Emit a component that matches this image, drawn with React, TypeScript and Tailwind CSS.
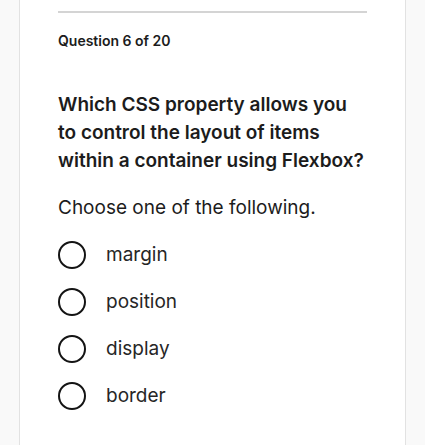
import { useState } from 'react';

const options = ['margin', 'position', 'display', 'border'];

export default function App() {
  const [selected, setSelected] = useState<string | null>(null);

  return (
    <div className="min-h-[445px] bg-[#f9f9f9] pl-[19px]" style={{ fontFamily: 'Inter, "Noto Sans", sans-serif' }}>
      <div className="w-[387px] min-h-[445px] bg-white border-x border-[#e2e2e2] px-[38px] pt-[11px] text-[#1c1c1c]">
        <div className="h-[2px] bg-[#d4d4d4]" />
        <p className="mt-[19px] text-[14px] leading-[18px] font-semibold">Question 6 of 20</p>
        <h2 className="mt-[41px] text-[19px] leading-[28px] font-semibold">
          Which CSS property allows you to control the layout of items within a container using Flexbox?
        </h2>
        <p className="mt-[19px] text-[19px] leading-[28px]">Choose one of the following.</p>
        <div className="mt-[19px] flex flex-col gap-[19px]">
          {options.map(o => (
            <button key={o} onClick={() => setSelected(o)} className="flex items-center gap-[20px] text-left">
              <span className="w-[28px] h-[28px] rounded-full border-[2.5px] border-[#141414] flex items-center justify-center">
                {selected === o && <span className="w-[14px] h-[14px] rounded-full bg-[#141414]" />}
              </span>
              <span className="text-[19px] leading-[28px] text-[#262626]">{o}</span>
            </button>
          ))}
        </div>
      </div>
    </div>
  );
}
